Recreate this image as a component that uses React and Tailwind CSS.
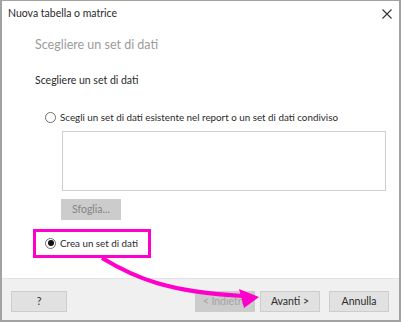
import React from "react";

const Radio = ({ checked }) => (
  <span className="w-[11px] h-[11px] rounded-full border border-[#6d6d6d] bg-white flex items-center justify-center shrink-0">
    {checked ? <span className="w-[6px] h-[6px] rounded-full bg-[#111]" /> : null}
  </span>
);

const Btn = ({ children, className = "" }) => (
  <div className={`h-[21px] flex items-center justify-center border text-[10.5px] ${className}`}>{children}</div>
);

export default function App() {
  return (
    <div
      className="relative w-[401px] h-[322px] bg-white border-x-2 border-b-2 border-t border-[#a2a2a2] flex flex-col text-[#2a2a2a]"
      style={{ fontFamily: 'Lato, "Open Sans", sans-serif' }}
    >
      <div className="h-[26px] flex items-center justify-between pl-[6px] pr-[7px]">
        <span className="text-[10.5px]">Nuova tabella o matrice</span>
        <svg width="10" height="10" viewBox="0 0 10 10" className="mt-[-1px]">
          <path d="M0.5 0.5 L9.5 9.5 M9.5 0.5 L0.5 9.5" stroke="#333" strokeWidth="1.1" />
        </svg>
      </div>

      <div className="flex flex-col pl-[33px] flex-1">
        <div className="mt-[8px] h-[20px] leading-[20px] text-[12.5px] text-[#9b9b9b]">Scegliere un set di dati</div>
        <div className="mt-[17px] h-[16px] leading-[16px] text-[10.5px]">Scegliere un set di dati</div>

        <div className="mt-[21px] h-[16px] pl-[10px] flex items-center gap-[4px]">
          <Radio />
          <span className="text-[9.8px]">Scegli un set di dati esistente nel report o un set di dati condiviso</span>
        </div>

        <div className="mt-[6px] ml-[27px] w-[324px] h-[60px] border border-[#cfcfcf]" />

        <div className="mt-[8px] ml-[26px] w-[60px] h-[21px] bg-[#cccccc] flex items-center justify-center text-[10.5px] text-[#858585]">
          Sfoglia...
        </div>

        <div className="mt-[15px] h-[16px] pl-[10px] flex items-center gap-[4px]">
          <Radio checked />
          <span className="text-[9.8px]">Crea un set di dati</span>
        </div>
      </div>

      <div className="h-[42px] border-t border-[#e3e3e3] bg-[#f0f0f0] flex items-start pt-[12px] pl-[9px] pr-[10px]">
        <Btn className="w-[56px] bg-[#e1e1e1] border-[#cdcdcd]">?</Btn>
        <div className="flex-1" />
        <Btn className="w-[60px] bg-[#cccccc] border-[#cccccc] text-[#a3a3a3]">&lt; Indietro</Btn>
        <Btn className="ml-[5px] w-[60px] bg-[#e1e1e1] border-[#cdcdcd]">Avanti &gt;</Btn>
        <Btn className="ml-[9px] w-[60px] bg-[#e1e1e1] border-[#cdcdcd]">Annulla</Btn>
      </div>

      <svg className="absolute left-[-2px] top-[-1px] pointer-events-none" width="401" height="322" viewBox="0 0 401 322">
        <rect x="34.5" y="230.5" width="115" height="26" fill="none" stroke="#ff00cc" strokeWidth="3" />
        <path d="M102 258 C 135 278, 168 292, 243 296" fill="none" stroke="#ff00cc" strokeWidth="4" />
        <polygon points="239,289 259,297 244,308" fill="#ff00cc" />
      </svg>
    </div>
  );
}
